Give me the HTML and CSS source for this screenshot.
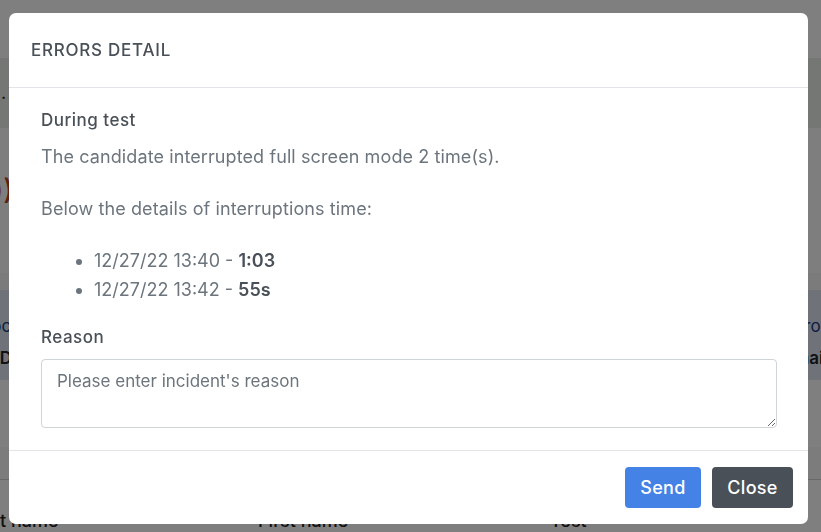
FILE: index.html
```html
<!DOCTYPE html>
<html lang="en">
<head>
<meta charset="utf-8">
<title>Errors detail</title>
<link rel="stylesheet" href="styles.css">
</head>
<body>
<div class="page">
  <div class="topbar"></div>
  <div class="subbar"><span class="dot">.</span></div>
  <div class="hero"><span class="red">Errors (2 time(s))</span></div>
  <div class="strip"></div>
  <div class="thead">
    <div class="trow"><span class="cell-l blue">Doc</span><span class="cell-r blue">Error</span></div>
    <div class="trow"><span class="cell-l2 dark">ID</span><span class="cell-r2 dark">Email</span></div>
  </div>
  <div class="gap"></div>
  <div class="strip2"></div>
  <div class="tbody">
    <span class="c1">Last name</span><span class="c2">First name</span><span class="c3">Test</span>
  </div>
</div>

<div class="overlay">
  <div class="modal">
    <div class="modal-header">
      <h5 class="modal-title">ERRORS DETAIL</h5>
    </div>
    <div class="modal-body">
      <h6 class="section-title">During test</h6>
      <p class="text first">The candidate interrupted full screen mode 2 time(s).</p>
      <p class="text">Below the details of interruptions time:</p>
      <ul class="list">
        <li>12/27/22 13:40 - <strong>1:03</strong></li>
        <li>12/27/22 13:42 - <strong>55s</strong></li>
      </ul>
      <label class="section-title reason" for="reason">Reason</label>
      <textarea id="reason" class="input" placeholder="Please enter incident's reason"></textarea>
    </div>
    <div class="modal-footer">
      <button class="btn btn-primary">Send</button>
      <button class="btn btn-dark">Close</button>
    </div>
  </div>
</div>
</body>
</html>
```

FILE: styles.css
```css
* { box-sizing: border-box; }
html, body { margin: 0; padding: 0; }
body {
  width: 821px;
  height: 532px;
  overflow: hidden;
  font-family: Inter, "Noto Sans", "Liberation Sans", sans-serif;
  background: #fff;
}

/* background page */
.page { width: 821px; height: 532px; overflow: hidden; }
.topbar { height: 58px; background: #fefefe; }
.subbar { height: 70px; background: #eaeeea; font-size: 18px; color: #222; }
.dot { display: block; padding: 24px 0 0 1px; }
.hero { height: 145px; background: #fdfdfd; padding-top: 44px; font-size: 28px; font-weight: 500; }
.red { color: #c0401f; display: block; margin-left: -214px; }
.strip { height: 17px; background: #f6f6f6; }
.thead { height: 90px; background: #dfe4f1; padding-top: 26px; font-size: 17px; }
.trow { display: flex; justify-content: space-between; height: 32px; }
.cell-l { margin-left: -21px; }
.cell-r { margin-right: -6px; }
.cell-l2 { margin-left: -5px; }
.cell-r2 { margin-right: -7px; }
.blue { color: #1b3b86; }
.dark { color: #222; font-weight: 600; }
.gap { height: 67px; background: #fefefe; }
.strip2 { height: 33px; background: #f8f8f8; border-bottom: 1px solid #d0d0d0; }
.tbody { display: flex; padding-top: 30px; font-size: 18px; font-weight: 500; color: #222; }
.c1 { margin-left: -30px; width: 288px; }
.c2 { width: 292px; }

/* overlay + modal */
.overlay {
  position: fixed;
  inset: 0;
  background: rgba(0, 0, 0, 0.5);
  padding: 13px 13px 0 9px;
}
.modal {
  width: 799px;
  height: 511px;
  background: #fff;
  border-radius: 7px;
  display: flex;
  flex-direction: column;
  overflow: hidden;
}
.modal-header {
  height: 75px;
  border-bottom: 1px solid #e3e4ea;
  display: flex;
  align-items: center;
  padding: 0 22px;
}
.modal-title {
  margin: 0;
  font-size: 17px;
  font-weight: 500;
  letter-spacing: 0.75px;
  color: #495057;
  line-height: 24px;
}
.modal-body {
  padding: 20px 31px 22px 32px;
  display: flex;
  flex-direction: column;
  color: #6c757d;
}
.section-title {
  margin: 0;
  font-size: 17px;
  font-weight: 500;
  letter-spacing: 0.5px;
  line-height: 24px;
  color: #495057;
}
.text {
  margin: 0;
  font-size: 18px;
  letter-spacing: 0.1px;
  line-height: 24px;
  color: #6c757d;
}
.text.first { margin-top: 13px; margin-bottom: 28px; }
.list {
  margin: 25px 0 21px 0;
  padding-left: 53px;
  font-size: 18px;
  line-height: 29px;
  color: #6c757d;
}
.list strong { color: #495057; font-weight: 600; }
.reason { display: block; }
.input {
  margin-top: 10px;
  width: 736px;
  height: 69px;
  border: 1px solid #ced4da;
  border-radius: 4px;
  padding: 10px 15px;
  font-family: Inter, "Noto Sans", sans-serif;
  font-size: 17px;
  line-height: 22px;
  color: #495057;
  resize: vertical;
}
.input::placeholder { color: #6c757d; opacity: 1; }
.modal-footer {
  flex: 1;
  border-top: 1px solid #e3e4ea;
  display: flex;
  justify-content: flex-end;
  align-items: flex-start;
  gap: 11px;
  padding: 16px 15px 0 0;
}
.btn {
  height: 41px;
  border: 0;
  border-radius: 4px;
  font-family: Inter, "Noto Sans", sans-serif;
  font-size: 18px;
  font-weight: 500;
  letter-spacing: 0.3px;
  color: #fff;
  padding: 0;
}
.btn-primary { background: #4582e6; width: 76px; }
.btn-dark { background: #495057; width: 81px; }
```
